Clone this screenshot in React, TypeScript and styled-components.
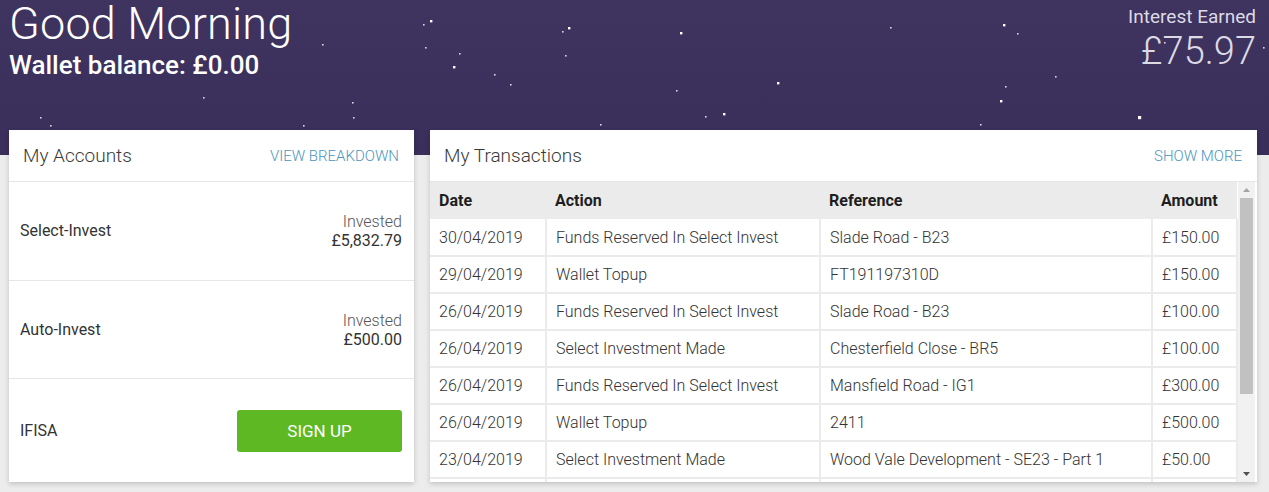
import React from "react";
import styled, { createGlobalStyle } from "styled-components";

const GlobalStyle = createGlobalStyle`
    html, body {
        margin: 0;
        padding: 0;
    }
    body {
        font-family: Roboto, "Liberation Sans", Arial, sans-serif;
        background: #ececec;
        color: #222;
    }
    * {
        box-sizing: border-box;
    }
`;

interface Account {
    name: string;
    invested?: string;
}

interface Transaction {
    date: string;
    action: string;
    reference: string;
    amount: string;
}

const accounts: Account[] = [
    { name: "Select-Invest", invested: "£5,832.79" },
    { name: "Auto-Invest", invested: "£500.00" },
    { name: "IFISA" },
];

const transactions: Transaction[] = [
    { date: "30/04/2019", action: "Funds Reserved In Select Invest", reference: "Slade Road - B23", amount: "£150.00" },
    { date: "29/04/2019", action: "Wallet Topup", reference: "FT191197310D", amount: "£150.00" },
    { date: "26/04/2019", action: "Funds Reserved In Select Invest", reference: "Slade Road - B23", amount: "£100.00" },
    { date: "26/04/2019", action: "Select Investment Made", reference: "Chesterfield Close - BR5", amount: "£100.00" },
    { date: "26/04/2019", action: "Funds Reserved In Select Invest", reference: "Mansfield Road - IG1", amount: "£300.00" },
    { date: "26/04/2019", action: "Wallet Topup", reference: "2411", amount: "£500.00" },
    { date: "23/04/2019", action: "Select Investment Made", reference: "Wood Vale Development - SE23 - Part 1", amount: "£50.00" },
    { date: "23/04/2019", action: "Funds Reserved In Select Invest", reference: "Wood Vale Development - SE23 - Part 1", amount: "£50.00" },
    { date: "20/04/2019", action: "Wallet Topup", reference: "2399", amount: "£200.00" },
];

// decorative star field in the header
const stars: [number, number, number][] = [
    [322, 44, 1], [303, 125, 1], [353, 117, 1], [430, 20, 1.5], [423, 24, 1], [425, 47, 1],
    [459, 53, 1], [453, 66, 1.5], [494, 74, 1], [510, 84, 1], [568, 27, 1.5], [562, 31, 1],
    [565, 55, 1], [680, 32, 1.5], [676, 90, 1], [705, 116, 1], [723, 113, 1.5], [777, 82, 1.5],
    [890, 27, 1], [1003, 24, 1.5], [1000, 100, 1.5], [1005, 86, 1], [1138, 116, 2],
    [1055, 76, 1], [1017, 33, 1], [1263, 47, 1], [1164, 42, 1], [980, 124, 1], [40, 117, 1],
    [50, 125, 1], [203, 97, 1], [352, 102, 1], [600, 124, 1],
];

const App: React.FC = () => {
    return (
        <>
            <GlobalStyle />
            <Page>
                <StarField width="1269" height="155" viewBox="0 0 1269 155">
                    {stars.map(([x, y, r], i) => (
                        <rect key={i} x={x} y={y} width={r * 1.6} height={r * 1.6} fill="#ffffff" opacity={r > 1 ? 1 : 0.8} />
                    ))}
                </StarField>
                <Header>
                    <Greeting>
                        <Hello>Good Morning</Hello>
                        <Wallet>Wallet balance: £0.00</Wallet>
                    </Greeting>
                    <Interest>
                        <InterestLabel>Interest Earned</InterestLabel>
                        <InterestValue>£75.97</InterestValue>
                    </Interest>
                </Header>

                <Cards>
                    <Card>
                        <CardHeader>
                            <CardTitle>My Accounts</CardTitle>
                            <CardLink>View Breakdown</CardLink>
                        </CardHeader>
                        {accounts.map((acc, i) => (
                            <AccountRow key={acc.name} last={i === accounts.length - 1}>
                                <AccountName>{acc.name}</AccountName>
                                {acc.invested ? (
                                    <Invested>
                                        <InvestedLabel>Invested</InvestedLabel>
                                        <InvestedValue>{acc.invested}</InvestedValue>
                                    </Invested>
                                ) : (
                                    <SignUp>Sign Up</SignUp>
                                )}
                            </AccountRow>
                        ))}
                    </Card>

                    <Card>
                        <CardHeader right={15} left={14}>
                            <CardTitle>My Transactions</CardTitle>
                            <CardLink>Show More</CardLink>
                        </CardHeader>
                        <TableWrap>
                            <TableScroll>
                                <Table>
                                    <colgroup>
                                        <col style={{ width: 116 }} />
                                        <col style={{ width: 274 }} />
                                        <col style={{ width: 332 }} />
                                        <col />
                                    </colgroup>
                                    <thead>
                                        <tr>
                                            <Th>Date</Th>
                                            <Th>Action</Th>
                                            <Th>Reference</Th>
                                            <Th>Amount</Th>
                                        </tr>
                                    </thead>
                                    <tbody>
                                        {transactions.map((t, i) => (
                                            <tr key={i}>
                                                <Td>{t.date}</Td>
                                                <Td>{t.action}</Td>
                                                <Td>{t.reference}</Td>
                                                <Td>{t.amount}</Td>
                                            </tr>
                                        ))}
                                    </tbody>
                                </Table>
                            </TableScroll>
                            <ScrollBar>
                                <ScrollArrow>
                                    <svg width="7" height="4" viewBox="0 0 7 4"><path d="M0 4 L3.5 0 L7 4 Z" fill="#a3a3a3" /></svg>
                                </ScrollArrow>
                                <ScrollTrack>
                                    <ScrollThumb />
                                </ScrollTrack>
                                <ScrollArrow>
                                    <svg width="7" height="4" viewBox="0 0 7 4"><path d="M0 0 L3.5 4 L7 0 Z" fill="#505050" /></svg>
                                </ScrollArrow>
                            </ScrollBar>
                        </TableWrap>
                    </Card>
                </Cards>
            </Page>
        </>
    );
};

export default App;

const Page = styled.div`
    position: relative;
    width: 1269px;
    height: 492px;
    overflow: hidden;
    background: linear-gradient(to bottom, #3f3360 0, #3a2f5b 155px, #ececec 155px, #ececec 100%);
`;

const StarField = styled.svg`
    position: absolute;
    top: 0;
    left: 0;
    pointer-events: none;
`;

const Header = styled.header`
    position: relative;
    display: flex;
    justify-content: space-between;
    align-items: flex-start;
    height: 130px;
    padding: 0 13px 0 9px;
    color: #fff;
`;

const Greeting = styled.div`
    display: flex;
    flex-direction: column;
`;

const Hello = styled.h1`
    margin: 0;
    font-size: 45px;
    font-weight: 300;
    line-height: 48px;
    letter-spacing: 0.2px;
`;

const Wallet = styled.div`
    font-size: 26px;
    font-weight: 500;
    line-height: 30px;
    margin-top: 2px;
`;

const Interest = styled.div`
    display: flex;
    flex-direction: column;
    align-items: flex-end;
    padding-top: 5px;
    color: #dcdae3;
`;

const InterestLabel = styled.div`
    font-size: 19px;
    font-weight: 400;
    line-height: 24px;
`;

const InterestValue = styled.div`
    font-size: 38px;
    font-weight: 300;
    line-height: 44px;
`;

const Cards = styled.div`
    position: relative;
    display: grid;
    grid-template-columns: 405px 827px;
    gap: 16px;
    padding: 0 12px 0 9px;
    align-items: start;
`;

const Card = styled.section`
    background: #fff;
    box-shadow: 0 2px 5px rgba(0, 0, 0, 0.18);
    height: 352px;
    display: flex;
    flex-direction: column;
`;

const CardHeader = styled.div<{ left?: number; right?: number }>`
    display: flex;
    justify-content: space-between;
    align-items: center;
    height: 52px;
    flex-shrink: 0;
    padding: 0 ${({ right }) => right ?? 15}px 0 ${({ left }) => left ?? 14}px;
    border-bottom: 1px solid #e6e6e6;
`;

const CardTitle = styled.h2`
    margin: 0;
    font-size: 19px;
    font-weight: 300;
    color: #3a3a3a;
`;

const CardLink = styled.a`
    font-size: 15px;
    font-weight: 300;
    text-transform: uppercase;
    color: #4d95bd;
    cursor: pointer;
`;

const AccountRow = styled.div<{ last?: boolean }>`
    display: flex;
    justify-content: space-between;
    align-items: center;
    height: ${({ last }) => (last ? 103 : 99)}px;
    padding: 0 12px 0 11px;
    border-bottom: ${({ last }) => (last ? "none" : "1px solid #e6e6e6")};
`;

const AccountName = styled.span`
    font-size: 16px;
    font-weight: 400;
    color: #333;
`;

const Invested = styled.div`
    display: flex;
    flex-direction: column;
    align-items: flex-end;
    font-size: 16px;
    line-height: 19px;
`;

const InvestedLabel = styled.span`
    color: #555;
    font-weight: 300;
`;

const InvestedValue = styled.span`
    color: #333;
    font-weight: 400;
`;

const SignUp = styled.button`
    width: 165px;
    height: 42px;
    border: none;
    border-radius: 3px;
    background: #5eb823;
    color: #fff;
    font-family: inherit;
    font-size: 17px;
    font-weight: 400;
    text-transform: uppercase;
    cursor: pointer;
`;

const TableWrap = styled.div`
    display: flex;
    flex: 1;
    min-height: 0;
    padding-right: 2px;
`;

const TableScroll = styled.div`
    flex: 1;
    overflow: hidden;
`;

const Table = styled.table`
    width: 100%;
    border-collapse: collapse;
    table-layout: fixed;
`;

const Th = styled.th`
    height: 37px;
    padding: 0 9px;
    background: #ebebeb;
    text-align: left;
    font-size: 16px;
    font-weight: 700;
    color: #1e1e1e;
`;

const Td = styled.td`
    height: 37px;
    padding: 0 9px;
    border: 2px solid #ebebeb;
    border-top: none;
    font-size: 16px;
    font-weight: 300;
    color: #333;
    white-space: nowrap;
    overflow: hidden;

    &:first-child {
        border-left: none;
    }
`;

const ScrollBar = styled.div`
    width: 17px;
    display: flex;
    flex-direction: column;
    background: #f1f1f1;
`;

const ScrollArrow = styled.div`
    height: 16px;
    display: flex;
    align-items: center;
    justify-content: center;
`;

const ScrollTrack = styled.div`
    flex: 1;
    padding: 0 2px;
`;

const ScrollThumb = styled.div`
    height: 196px;
    background: #c1c1c1;
`;
